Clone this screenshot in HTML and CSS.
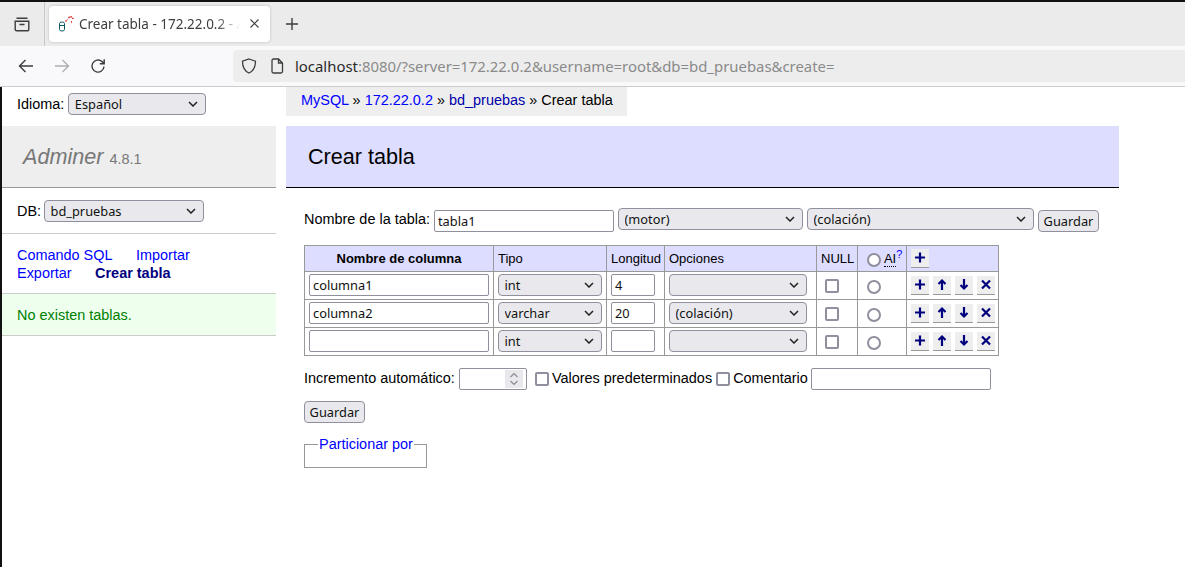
FILE: index.html
```html
<!DOCTYPE html>
<html lang="en">
<head>
    <meta charset="UTF-8">
    <meta name="viewport" content="width=device-width, initial-scale=1.0">
    <title>Crear tabla - 172.22.0.2 - Adminer</title>
    <link rel="stylesheet" href="styles.css">
</head>
<body>
    <svg class="defs" aria-hidden="true">
        <symbol id="i-plus" viewBox="0 0 18 18"><path d="M9 3.5v10M4 8.5h10" /></symbol>
        <symbol id="i-up" viewBox="0 0 18 18"><path d="M9 14V4.5M5.5 8 9 4.5 12.5 8" /></symbol>
        <symbol id="i-down" viewBox="0 0 18 18"><path d="M9 3v9.5M5.5 9 9 12.5 12.5 9" /></symbol>
        <symbol id="i-del" viewBox="0 0 18 18"><path d="M5 4.500l8 8M13 4.500l-8 8" /></symbol>
    </svg>

    <header class="browser">
        <div class="tabstrip">
            <div class="tab-side">
                <svg width="18" height="18" viewBox="0 0 18 18" fill="none" stroke="#3d3d3d" stroke-width="1.4"><path d="M3.5 3.2h11M2.2 6.2h13.6v8.2a1.4 1.4 0 0 1-1.4 1.4H3.600a1.4 1.4 0 0 1-1.4-1.4zM6.500 9.500h5"/></svg>
            </div>
            <div class="tab">
                <svg class="favicon" width="16" height="16" viewBox="0 0 16 16" fill="none"><path d="M1.500 7.500a2.500 1.500 0 0 1 5 0v6a2.500 1.500 0 0 1-5 0zM1.500 9.500h5" stroke="#0b5a66" stroke-width="1"/><path d="M7.500 5.500l2-2M10.500 2l1-1h2l1.500 1.500v1M13 6h1" stroke="#d01010" stroke-width="1.300" stroke-dasharray="1.500 .8"/></svg>
                <span class="tab-title">Crear tabla - 172.22.0.2 - A</span>
                <svg class="tab-close" width="12" height="12" viewBox="0 0 12 12" stroke="#444" stroke-width="1.200"><path d="M1.500 1.500l8 8M9.500 1.500l-8 8"/></svg>
            </div>
            <svg class="new-tab" width="14" height="14" viewBox="0 0 14 14" stroke="#3d3d3d" stroke-width="1.400"><path d="M7 1v12M1 7h12"/></svg>
        </div>
        <div class="toolbar">
            <div class="nav-btns">
                <svg width="16" height="16" viewBox="0 0 16 16" fill="none" stroke="#3d3d3d" stroke-width="1.400"><path d="M15 8H1.500M7.500 2 1.500 8l6 6"/></svg>
                <svg width="16" height="16" viewBox="0 0 16 16" fill="none" stroke="#b0b0b0" stroke-width="1.400"><path d="M1 8h13.500M8.500 2l6 6-6 6"/></svg>
                <svg width="16" height="16" viewBox="0 0 16 16" fill="none" stroke="#3d3d3d" stroke-width="1.400"><path d="M14 8.500A6 6 0 1 1 11.800 3.400L14 5.500M14.200 1.200v4.500H9.800"/></svg>
            </div>
            <div class="urlbar">
                <svg width="16" height="16" viewBox="0 0 16 16" fill="none" stroke="#3d3d3d" stroke-width="1.300"><path d="M8 1 14.500 3.200C14.500 9 12.500 13 8 15 3.500 13 1.500 9 1.500 3.200z"/></svg>
                <svg width="16" height="16" viewBox="0 0 16 16" fill="none" stroke="#3d3d3d" stroke-width="1.300"><path d="M3 2.500A1.500 1.500 0 0 1 4.500 1H9.500L13.500 5V13.500A1.500 1.500 0 0 1 12 15H4.500A1.500 1.500 0 0 1 3 13.500zM9.500 1V5H13.500"/></svg>
                <span class="url"><b>localhost</b>:8080/?server=172.22.0.2&amp;username=root&amp;db=bd_pruebas&amp;create=</span>
            </div>
        </div>
    </header>

    <div class="page">
        <aside class="sidebar">
            <div class="lang">
                <label>Idioma:</label>
                <select class="ctl lang-select"><option>Español</option></select>
            </div>
            <h1 class="logo"><em>Adminer</em> <span>4.8.1</span></h1>
            <div class="db">
                <label>DB:</label>
                <select class="ctl db-select"><option>bd_pruebas</option></select>
            </div>
            <nav class="links">
                <a href="#">Comando SQL</a><a href="#">Importar</a><br>
                <a href="#">Exportar</a><a href="#" class="active">Crear tabla</a>
            </nav>
            <p class="no-tables">No existen tablas.</p>
        </aside>

        <main class="content">
            <p class="breadcrumb"><a href="#">MySQL</a> » <a href="#">172.22.0.2</a> » <a href="#" class="seen">bd_pruebas</a> » Crear tabla</p>
            <h2 class="title">Crear tabla</h2>
            <form class="create-form">
                <div class="name-row">
                    <label>Nombre de la tabla:</label>
                    <input class="txt table-name" type="text" value="tabla1">
                    <select class="ctl engine"><option>(motor)</option></select>
                    <select class="ctl collation"><option>(colación)</option></select>
                    <button type="button" class="btn">Guardar</button>
                </div>

                <table class="columns">
                    <colgroup>
                        <col class="c-name"><col class="c-type"><col class="c-len"><col class="c-opt"><col class="c-null"><col class="c-ai"><col>
                    </colgroup>
                    <thead>
                        <tr>
                            <th class="head-name">Nombre de columna</th>
                            <td>Tipo</td>
                            <td>Longitud</td>
                            <td>Opciones</td>
                            <td>NULL</td>
                            <td class="ai-cell"><input type="radio" class="radio"> <abbr>AI</abbr><a href="#" class="help">?</a></td>
                            <td class="actions"><button type="button" class="icon-btn"><svg><use href="#i-plus"/></svg></button></td>
                        </tr>
                    </thead>
                    <tbody>
                        <tr>
                            <td class="field"><input class="txt col-name" type="text" value="columna1"></td>
                            <td class="field"><select class="ctl col-type"><option>int</option></select></td>
                            <td class="field"><input class="txt col-len" type="text" value="4"></td>
                            <td class="field"><select class="ctl col-opt"><option></option></select></td>
                            <td><input type="checkbox" class="check"></td>
                            <td class="ai-cell"><input type="radio" class="radio"></td>
                            <td class="actions">
                                <button type="button" class="icon-btn"><svg><use href="#i-plus"/></svg></button>
                                <button type="button" class="icon-btn"><svg><use href="#i-up"/></svg></button>
                                <button type="button" class="icon-btn"><svg><use href="#i-down"/></svg></button>
                                <button type="button" class="icon-btn"><svg><use href="#i-del"/></svg></button>
                            </td>
                        </tr>
                        <tr>
                            <td class="field"><input class="txt col-name" type="text" value="columna2"></td>
                            <td class="field"><select class="ctl col-type"><option>varchar</option></select></td>
                            <td class="field"><input class="txt col-len" type="text" value="20"></td>
                            <td class="field"><select class="ctl col-opt"><option>(colación)</option></select></td>
                            <td><input type="checkbox" class="check"></td>
                            <td class="ai-cell"><input type="radio" class="radio"></td>
                            <td class="actions">
                                <button type="button" class="icon-btn"><svg><use href="#i-plus"/></svg></button>
                                <button type="button" class="icon-btn"><svg><use href="#i-up"/></svg></button>
                                <button type="button" class="icon-btn"><svg><use href="#i-down"/></svg></button>
                                <button type="button" class="icon-btn"><svg><use href="#i-del"/></svg></button>
                            </td>
                        </tr>
                        <tr>
                            <td class="field"><input class="txt col-name" type="text"></td>
                            <td class="field"><select class="ctl col-type"><option>int</option></select></td>
                            <td class="field"><input class="txt col-len" type="text"></td>
                            <td class="field"><select class="ctl col-opt"><option></option></select></td>
                            <td><input type="checkbox" class="check"></td>
                            <td class="ai-cell"><input type="radio" class="radio"></td>
                            <td class="actions">
                                <button type="button" class="icon-btn"><svg><use href="#i-plus"/></svg></button>
                                <button type="button" class="icon-btn"><svg><use href="#i-up"/></svg></button>
                                <button type="button" class="icon-btn"><svg><use href="#i-down"/></svg></button>
                                <button type="button" class="icon-btn"><svg><use href="#i-del"/></svg></button>
                            </td>
                        </tr>
                    </tbody>
                </table>

                <div class="options-row">
                    <label>Incremento automático:</label>
                    <span class="spin-input">
                        <span class="spin"><svg width="18" height="18" viewBox="0 0 18 18" fill="none" stroke="#8a8a94" stroke-width="1.200"><path d="M5.500 7 9 3.500 12.500 7M5.500 11 9 14.500 12.500 11"/></svg></span>
                    </span>
                    <input type="checkbox" class="check opt-check"><label>Valores predeterminados</label>
                    <input type="checkbox" class="check opt-check-2"><label>Comentario</label>
                    <input class="txt comment" type="text">
                </div>

                <button type="button" class="btn save-bottom">Guardar</button>

                <fieldset class="partition">
                    <legend><a href="#">Particionar por</a></legend>
                </fieldset>
            </form>
        </main>
    </div>
</body>
</html>
```

FILE: styles.css
```css
* {
    box-sizing: border-box;
}
html, body {
    height: 100%;
}
body {
    margin: 0;
    overflow: hidden;
    background: #fff;
    color: #000;
    font: 14.45px/18px "Liberation Sans", Arial, sans-serif;
    border-top: 2px solid #111;
}
.defs {
    display: none;
}
a {
    color: #00f;
    text-decoration: none;
}

/* browser chrome */
.browser {
    font-family: "Noto Sans", sans-serif;
}
.tabstrip {
    height: 44px;
    background: #ebebeb;
    display: flex;
    align-items: center;
}
.tab-side {
    width: 45px;
    height: 44px;
    padding-left: 13px;
    border-right: 1px solid #c8c8c8;
    display: flex;
    align-items: center;
}
.tab {
    width: 221px;
    height: 36px;
    margin-left: 4px;
    padding: 0 4px 0 9px;
    background: #fff;
    border-radius: 4px;
    box-shadow: 0 0 3px rgba(0, 0, 0, .2);
    display: flex;
    align-items: center;
}
.tab-title {
    width: 164px;
    flex: none;
    margin-left: 5px;
    font-size: 13.5px;
    color: #3d3d3d;
    white-space: nowrap;
    -webkit-mask-image: linear-gradient(90deg, #000 84%, transparent 98%);
    mask-image: linear-gradient(90deg, #000 84%, transparent 98%);
}
.tab-close {
    margin-left: 6px;
}
.new-tab {
    margin-left: 15px;
}
.toolbar {
    height: 41px;
    background: #f9f9fb;
    border-bottom: 1px solid #ccc;
    display: flex;
    align-items: center;
}
.nav-btns {
    width: 233px;
    padding-left: 18px;
    display: flex;
    gap: 20px;
}
.urlbar {
    flex: 1;
    height: 32px;
    background: #ededed;
    border-radius: 4px 0 0 4px;
    padding-left: 8px;
    display: flex;
    align-items: center;
    gap: 12px;
}
.url {
    font-size: 14.9px;
    margin-left: -2px;
    color: #8a8a8a;
    white-space: nowrap;
}
.url b {
    font-weight: 400;
    color: #2a2a2a;
}

/* page */
.page {
    height: 480px;
    border-left: 2px solid #111;
    display: flex;
}
.sidebar {
    width: 274px;
    flex: none;
}
.content {
    margin-left: 10px;
    flex: 1;
    min-width: 0;
}

/* form controls */
select.ctl, input.txt, .btn, .spin-input {
    font: 12.8px "Noto Sans", sans-serif;
    color: #111;
    height: 22px;
    border: 1px solid #8f8f9d;
    border-radius: 4px;
}
select.ctl {
    appearance: none;
    -webkit-appearance: none;
    padding: 0 20px 0 5.500px;
    background: #e9e9ed url("data:image/svg+xml,%3Csvg xmlns='http://www.w3.org/2000/svg' width='10' height='6'%3E%3Cpath d='M1 1l4 4 4-4' fill='none' stroke='%23222' stroke-width='1.500'/%3E%3C/svg%3E") no-repeat right 7px center;
}
input.txt {
    padding: 0 3px;
    background: #fff;
    border-radius: 2px;
}
.btn {
    width: 61px;
    padding: 0;
    background: #e9e9ed;
}
.check, .radio {
    appearance: none;
    -webkit-appearance: none;
    margin: 0;
    width: 14px;
    height: 14px;
    background: #fff;
    border: 2px solid #8f8f9d;
}
.check {
    border-radius: 2px;
}
.radio {
    border-radius: 50%;
}

/* sidebar */
.lang {
    height: 39px;
    padding: 6px 0 0 15px;
    display: flex;
    align-items: flex-start;
    gap: 4px;
}
.lang label {
    line-height: 22px;
}
.lang-select {
    width: 138px;
}
.logo {
    margin: 0;
    height: 62px;
    padding-left: 21px;
    background: #eee;
    border-bottom: 1px solid #999;
    color: #777;
    font-size: 14.45px;
    font-weight: 400;
    line-height: 61px;
}
.logo em {
    font-size: 21.6px;
}
.logo span {
    margin-left: 2px;
}
.db {
    height: 46px;
    padding: 12px 0 0 15px;
    border-bottom: 1px solid #ccc;
    display: flex;
    align-items: flex-start;
    gap: 3px;
}
.db label {
    line-height: 22px;
}
.db-select {
    width: 160px;
}
.links {
    height: 60px;
    padding: 12px 0 0 15px;
    line-height: 18px;
    border-bottom: 1px solid #ccc;
}
.links a {
    margin-right: 23.5px;
}
.links a.active {
    color: #00007f;
    font-weight: 700;
}
.no-tables {
    margin: 0;
    height: 42px;
    padding-left: 15px;
    background: #efe;
    border-bottom: 1px solid #ccc;
    color: #008000;
    line-height: 43px;
}

/* content */
.breadcrumb {
    margin: 0;
    width: 341px;
    height: 29px;
    padding: 4px 0 0 15px;
    background: #eee;
}
.breadcrumb a.seen {
    color: #00a;
}
.title {
    margin: 10px 66px 0 0;
    height: 62px;
    padding-left: 22px;
    background: #ddf;
    border-bottom: 1px solid #000;
    font-size: 21.6px;
    font-weight: 400;
    line-height: 61px;
}
.create-form {
    padding: 20px 0 0 18px;
}
.name-row {
    display: flex;
    align-items: flex-start;
}
.name-row label {
    line-height: 22px;
    margin-right: 4px;
}
.table-name {
    width: 180px;
    margin-top: 2px;
}
.engine {
    width: 185px;
    margin-left: 4px;
}
.collation {
    width: 227px;
    margin-left: 4px;
}
.name-row .btn {
    margin: 2px 0 0 4px;
}

/* columns table */
.columns {
    margin-top: 13px;
    width: 695px;
    table-layout: fixed;
    border-collapse: collapse;
    border: 1px solid #999;
}
.columns td, .columns th {
    padding: 0 4px;
    border: 1px solid #999;
    height: 28px;
    white-space: nowrap;
}
.columns thead td, .columns thead th {
    height: 26px;
    padding-top: 0;
    background: #ddf;
    font-size: 13px;
}
.columns tbody td {
    line-height: 0;
}
.columns tbody td.field {
    padding-bottom: 2px;
}
.c-name { width: 189px; }
.c-type { width: 113px; }
.c-len { width: 58px; }
.c-opt { width: 152px; }
.c-null { width: 41px; }
.c-ai { width: 49px; }
.col-name { width: 180px; }
.col-type { width: 104px; }
.col-len { width: 44px; }
.col-opt { width: 138px; }
.columns tbody .check {
    display: block;
    margin-left: 4px;
}
.ai-cell {
    padding-left: 9px !important;
}
.ai-cell .radio {
    vertical-align: -4px;
}
.columns tbody .radio {
    display: block;
    margin-top: 3px;
}
.ai-cell abbr {
    border-bottom: 1px dotted #000;
}
.help {
    font-size: 11px;
    vertical-align: 5px;
    line-height: 0;
}
.actions {
    padding: 0 0 0 4px !important;
    font-size: 14.4px;
}
.icon-btn {
    width: 18px;
    height: 19px;
    padding: 0;
    border: 0;
    border-bottom: 1px solid #999;
    background: #eee;
    vertical-align: middle;
}
.icon-btn svg {
    display: block;
    width: 18px;
    height: 18px;
    fill: none;
    stroke: #00007f;
    stroke-width: 2.200;
}

/* bottom options */
.options-row {
    margin-top: 12px;
    display: flex;
    align-items: flex-start;
}
.options-row label {
    line-height: 20px;
}
.spin-input {
    width: 68px;
    margin-left: 4px;
    border-radius: 2px;
    background: #fff;
    padding: 1px 3px 0 0;
    display: flex;
    justify-content: flex-end;
}
.spin {
    width: 18px;
    height: 18px;
    background: #e9e9ed;
}
.opt-check {
    margin: 4px 3px 0 8px;
}
.opt-check-2 {
    margin: 4px 3px 0 4px;
}
.comment {
    width: 180px;
    margin-left: 3px;
}
.save-bottom {
    display: block;
    margin-top: 11px;
}
.partition {
    margin: 12px 0 0;
    width: 123px;
    height: 33px;
    padding: 0 0 0 13px;
    border: 1px solid #999;
}
.partition legend {
    padding: 0 1px;
    line-height: 18px;
}
```
